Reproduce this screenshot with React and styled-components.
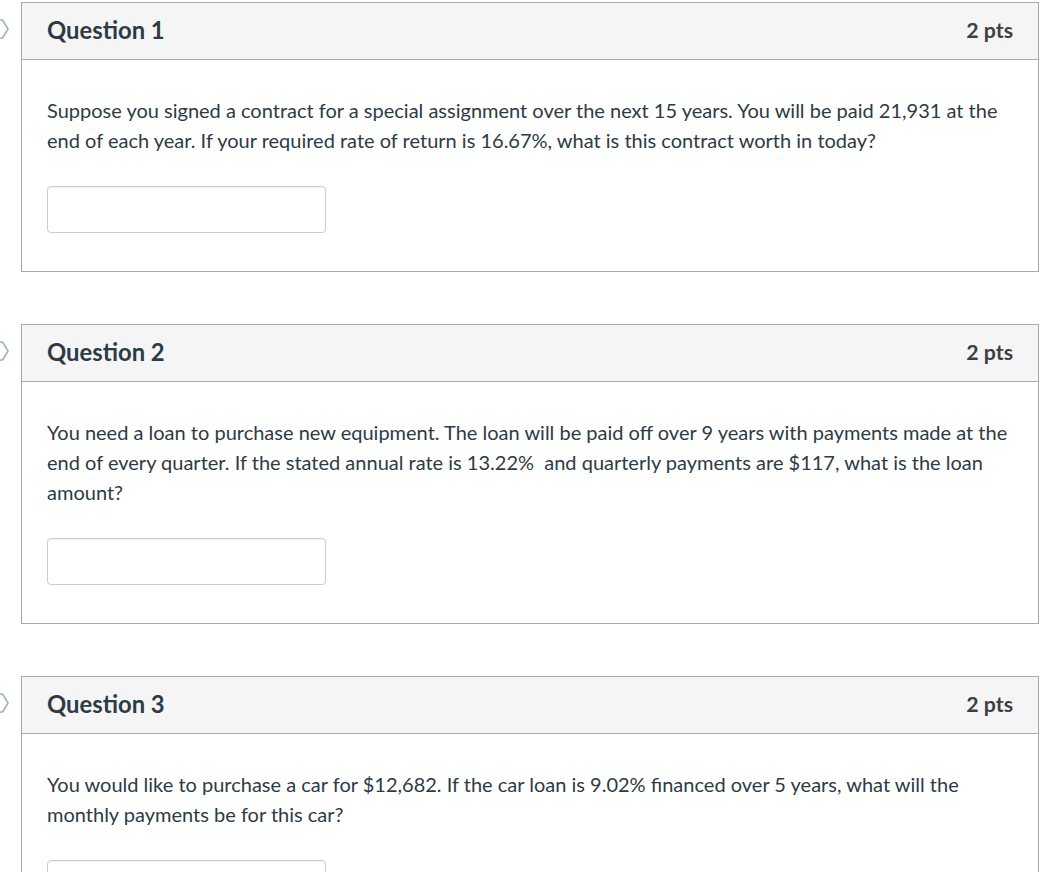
import React from "react";
import styled, { createGlobalStyle } from "styled-components";

const GlobalStyle = createGlobalStyle`
  body {
    margin: 0;
    background: #ffffff;
    font-family: Lato, "Open Sans", sans-serif;
    color: #2d3b45;
  }
`;

const questions = [
  {
    id: 1,
    points: "2 pts",
    text: "Suppose you signed a contract for a special assignment over the next 15 years. You will be paid 21,931 at the end of each year. If your required rate of return is 16.67%, what is this contract worth in today?",
  },
  {
    id: 2,
    points: "2 pts",
    text: "You need a loan to purchase new equipment. The loan will be paid off over 9 years with payments made at the end of every quarter. If the stated annual rate is 13.22%\u00a0 and quarterly payments are $117, what is the loan amount?",
  },
  {
    id: 3,
    points: "2 pts",
    text: "You would like to purchase a car for $12,682. If the car loan is 9.02% financed over 5 years, what will the monthly payments be for this car?",
  },
];

// flag marker sits half off-screen, left of each card
function FlagIcon() {
  return (
    <Flag width="20" height="22" viewBox="0 0 20 22">
      <path
        d="M0 2 H13.5 L19 11 L13.5 20 H0"
        fill="none"
        stroke="#9cb0c2"
        strokeWidth="1.5"
        strokeLinejoin="round"
      />
    </Flag>
  );
}

function QuestionCard({ id, points, text }) {
  return (
    <Card>
      <FlagIcon />
      <Header>
        <Title>Question {id}</Title>
        <Points>{points}</Points>
      </Header>
      <Body>
        <Text>{text}</Text>
        <AnswerInput type="text" aria-label={`Answer for question ${id}`} />
      </Body>
    </Card>
  );
}

export default function App() {
  return (
    <>
      <GlobalStyle />
      <Page>
        {questions.map((q) => (
          <QuestionCard key={q.id} {...q} />
        ))}
      </Page>
    </>
  );
}

const Page = styled("main")`
  padding: 2px 22px 0 21px;
  display: flex;
  flex-direction: column;
  gap: 52px;
`;

const Card = styled("section")`
  position: relative;
  border: 1px solid #aaaaaa;
  background: #ffffff;
`;

const Flag = styled("svg")`
  position: absolute;
  left: -33px;
  top: 15px;
`;

const Header = styled("header")`
  height: 56px;
  display: flex;
  align-items: center;
  justify-content: space-between;
  padding: 0 25px;
  background: #f5f5f5;
  border-bottom: 1px solid #aaaaaa;
`;

const Title = styled("h2")`
  margin: 0 0 2px;
  font-size: 23.8px;
  font-weight: 700;
  color: #2d3b45;
`;

const Points = styled("div")`
  margin-bottom: 2px;
  font-size: 21.3px;
  font-weight: 700;
  color: #3a4147;
`;

const Body = styled("div")`
  padding: 35px 25px 38px;
`;

const Text = styled("p")`
  margin: 0 0 31px;
  font-size: 20px;
  line-height: 30px;
  color: #2d3b45;
`;

const AnswerInput = styled("input")`
  display: block;
  box-sizing: border-box;
  width: 279px;
  height: 47px;
  border: 1px solid #c7cdd1;
  border-radius: 4px;
  background: #ffffff;
  box-shadow: inset 0 1px 1px rgba(0, 0, 0, 0.06);
  font: inherit;
`;
